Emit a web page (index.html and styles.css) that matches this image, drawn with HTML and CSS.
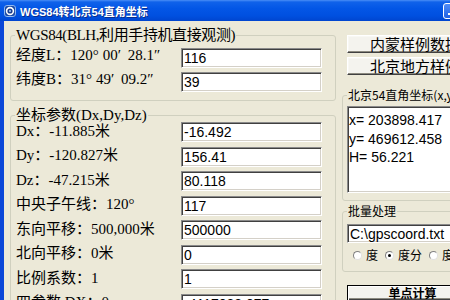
FILE: index.html
```html
<!DOCTYPE html>
<html>
<head>
<meta charset="utf-8">
<link rel="stylesheet" href="styles.css">
</head>
<body>
<div class="window">
  <div class="titlebar">
    <svg class="appicon" viewBox="0 0 12 12" width="12" height="12">
      <rect x="0.5" y="0.5" width="11" height="11" rx="2.5" fill="#1B4AA6" stroke="#8FB6EE"/>
      <circle cx="6" cy="6" r="3.4" fill="#1A3C8C" stroke="#ffffff" stroke-width="1.6"/>
      <circle cx="6" cy="6" r="1.1" fill="#9CC4F5"/>
    </svg>
    <span class="title">WGS84转北京54直角坐标</span>
    <span class="tb-btn"><span class="tb-min"></span></span>
  </div>
  <div class="client">
    <div class="col-left">
      <fieldset class="group g1">
        <legend>WGS84(BLH,利用手持机直接观测)</legend>
        <div class="rows">
          <span class="lbl">经度L：120<span class="fw">°</span>00<span class="fw">′</span>28.1<span class="fw">″</span></span><div class="edit">116</div>
          <span class="lbl">纬度B：31<span class="fw">°</span>49<span class="fw">′</span>09.2<span class="fw">″</span></span><div class="edit">39</div>
        </div>
      </fieldset>
      <fieldset class="group g2">
        <legend>坐标参数(Dx,Dy,Dz)</legend>
        <div class="rows">
          <span class="lbl">Dx：-11.885米</span><div class="edit">-16.492</div>
          <span class="lbl">Dy：-120.827米</span><div class="edit">156.41</div>
          <span class="lbl">Dz：-47.215米</span><div class="edit">80.118</div>
          <span class="lbl">中央子午线：120<span class="fw">°</span></span><div class="edit">117</div>
          <span class="lbl">东向平移：500,000米</span><div class="edit">500000</div>
          <span class="lbl">北向平移：0米</span><div class="edit">0</div>
          <span class="lbl">比例系数：1</span><div class="edit">1</div>
          <span class="lbl">四参数 DX：0</span><div class="edit">-4117088.077</div>
        </div>
      </fieldset>
    </div>
    <div class="col-right">
      <button class="btn b1">内蒙样例数据</button>
      <button class="btn b2">北京地方样例</button>
      <fieldset class="group g3">
        <legend>北京54直角坐标(x,y,H)</legend>
        <div class="memo">x= 203898.417<br>y= 469612.458<br>H= 56.221</div>
      </fieldset>
      <fieldset class="group g4">
        <legend>批量处理</legend>
        <div class="edit path">C:\gpscoord.txt</div>
        <div class="radios">
          <span class="ropt"><span class="radio"></span>度</span>
          <span class="ropt"><span class="radio on"></span>度分</span>
          <span class="ropt"><span class="radio"></span>度分秒</span>
        </div>
      </fieldset>
      <button class="btn def">单点计算</button>
    </div>
  </div>
</div>
</body>
</html>
```

FILE: styles.css
```css
* { box-sizing: border-box; }
html, body { margin: 0; padding: 0; }
body { width: 450px; height: 300px; overflow: hidden; background: #ECE9D8; }

.window {
  width: 450px; height: 300px; overflow: hidden;
  display: flex; flex-direction: column;
  background: #ECE9D8;
}

.titlebar {
  flex: 0 0 21px;
  display: flex; align-items: center;
  padding-left: 4px;
  background: linear-gradient(#4A8EF6 0, #1062EA 2px, #0356E6 40%, #0050E0 75%, #0045CF 100%);
}
.appicon { flex: none; display: block; }
.title {
  margin-left: 4px;
  color: #fff;
  font: bold 11px "Liberation Sans", "Noto Sans CJK SC", sans-serif;
  text-shadow: 1px 1px 0 #0A2D8C;
  white-space: nowrap;
}
.tb-btn {
  flex: none;
  margin-left: auto; margin-right: -10px;
  width: 17px; height: 16px;
  border: 1px solid #fff; border-radius: 3px;
  background: linear-gradient(#4F8CF7, #2062E5);
  display: flex; align-items: flex-end; padding: 0 0 3px 4px;
}
.tb-min { width: 6px; height: 2px; background: #fff; display: block; }

.client {
  flex: 1;
  display: flex;
  gap: 6px;
  border-left: 4px solid #0B47D8;
  padding: 7px 0 0 6px;
  min-height: 0;
}

.col-left { flex: 0 0 326px; display: flex; flex-direction: column; gap: 7px; }
.col-right { flex: 0 0 150px; display: flex; flex-direction: column; align-items: flex-start; }

.group {
  margin: 0;
  min-width: 0;
  border: 1px solid #D0D0BF;
  border-radius: 3px;
  padding: 0 13px 8px 5px;
}
.group legend {
  padding: 0 1px;
  margin-left: -1px;
  font: 15px/14px "Liberation Serif", "Noto Sans CJK SC", serif;
  color: #000;
  white-space: nowrap;
}
.g1 legend { letter-spacing: -0.4px; }
.g1 { padding-top: 6px; }
.g2 { padding-top: 0; }

.rows {
  display: grid;
  grid-template-columns: 165px 141px;
  grid-auto-rows: 20px;
  row-gap: 4px;
}
.g2 .rows { row-gap: 4.5px; }

.lbl {
  align-self: center;
  padding-bottom: 3px;
  font: 15px/16px "Liberation Serif", "Noto Sans CJK SC", serif;
  color: #000;
  white-space: nowrap;
}
.g1 .lbl { padding-bottom: 7px; }
.fw { display: inline-block; width: 10px; text-align: left; }

.edit {
  height: 20px;
  background: #fff;
  border: 1px solid;
  border-color: #8A8A8A #FFFFFF #FFFFFF #8A8A8A;
  box-shadow: inset 1px 1px 0 #404040, inset -1px -1px 0 #D4D0C8;
  padding: 0 0 0 2px;
  font: 14px/18px "Liberation Sans", Arial, sans-serif;
  color: #000;
  white-space: nowrap;
  overflow: hidden;
}

.btn {
  display: block;
  margin: 0 0 0 5px;
  width: 140px; height: 19px;
  padding: 0 0 0 22px;
  text-align: left;
  background: #F4F3EE;
  border: 1px solid;
  border-color: #FFFFFF #404040 #404040 #FFFFFF;
  box-shadow: inset -1px -1px 0 #8C8A80, inset 1px 1px 0 #F8F8F4;
  font: 15px/16px "Noto Sans CJK SC", sans-serif;
  color: #000;
  white-space: nowrap;
}
.b1 { margin-top: 7px; }
.b2 { margin-top: 4px; }

.g3 { width: 150px; margin-top: 13px; padding: 4px 0 7px 4px; }
.g3 legend, .g4 legend {
  margin-left: 0;
  font: 12px/14px "Noto Sans CJK SC", sans-serif;
}
.memo {
  height: 87px;
  background: #fff;
  border: 1px solid;
  border-color: #8A8A8A #FFFFFF #FFFFFF #8A8A8A;
  box-shadow: inset 1px 1px 0 #404040, inset -1px -1px 0 #D4D0C8;
  padding: 4px 0 0 1px;
  font: 14px/18.5px "Liberation Sans", Arial, sans-serif;
  color: #000;
  white-space: nowrap;
}

.g4 { width: 150px; margin-top: 3px; padding: 6px 0 8px 4px; }
.path { height: 19px; }
.radios {
  margin-top: 4px;
  height: 16px;
  display: flex; align-items: center; gap: 7px;
  padding-left: 6px;
  white-space: nowrap;
}
.ropt {
  display: flex; align-items: center; gap: 4px;
  font: 12px/14px "Noto Sans CJK SC", sans-serif;
  color: #000;
}
.radio {
  width: 9px; height: 9px; border-radius: 50%;
  background: #fff;
  border: 1px solid;
  border-color: #808080 #E0E0E0 #E0E0E0 #808080;
  display: flex; align-items: center; justify-content: center;
  flex: none;
}
.radio.on::after {
  content: ""; width: 3px; height: 3px; border-radius: 50%; background: #000;
}

.def {
  margin-top: 13px;
  height: 23px;
  width: 131px;
  padding: 0;
  text-align: center;
  border: 1px solid #000;
  box-shadow: inset 1px 1px 0 #FFFFFF, inset -1px -1px 0 #404040, inset -2px -2px 0 #8C8A80;
  font: bold 12px/14px "Noto Sans CJK SC", sans-serif;
}
```
